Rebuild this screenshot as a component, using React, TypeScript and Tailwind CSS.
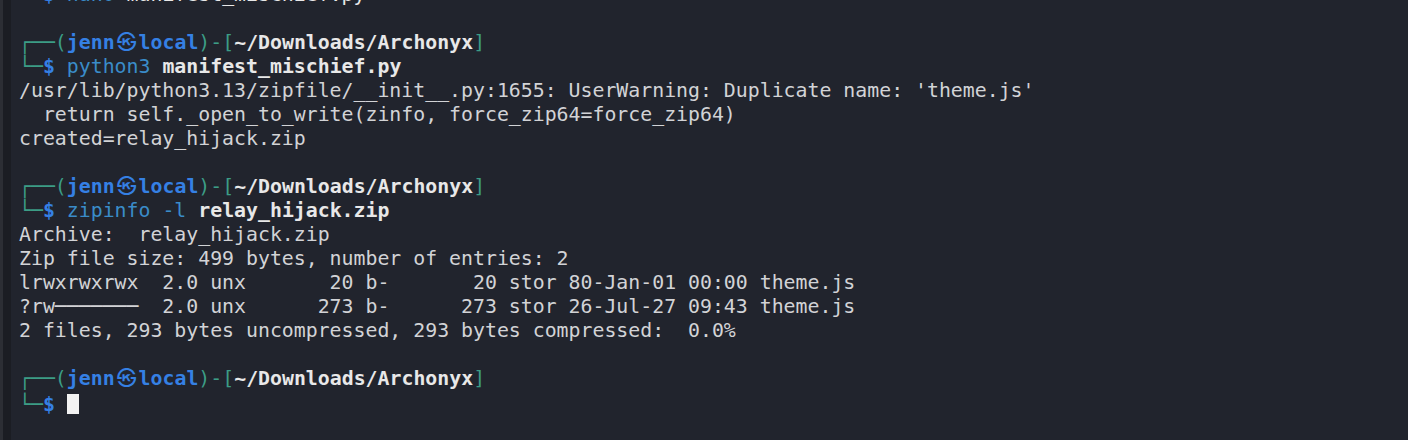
import type { ReactNode } from "react";

const G = "text-[#3c9d86]";
const B = "text-[#3580e4] font-bold";
const CMD = "text-[#3a8cc9]";
const W = "text-[#e8e8e8] font-bold";

function Prompt({ children }: { children?: ReactNode }) {
  return (
    <>
      <div>
        <span className={G}>┌──(</span>
        <span className={B}>
          jenn<span className="inline-block w-[24px] text-center font-normal">㉿</span>local
        </span>
        <span className={G}>)-[</span>
        <span className={W}>~/Downloads/Archonyx</span>
        <span className={G}>]</span>
      </div>
      <div>
        <span className={G}>└─</span>
        <span className={B}>$</span> {children}
      </div>
    </>
  );
}

export default function App() {
  return (
    <div className="flex h-[440px] w-[1408px] overflow-hidden bg-[#21242d]">
      <div className="w-[3px] shrink-0 bg-[#2c2e34]" />
      <div className="w-[8px] shrink-0 bg-[#1b1d23]" />
      <div
        className="flex-1 whitespace-pre pl-[8px] pt-0 text-[19.85px] leading-[24px] text-[#d2d3d6]"
        style={{ fontFamily: '"DejaVu Sans Mono", "Noto Sans CJK JP", monospace' }}
      >
        <div className="-mt-[17px]">
          <span className={G}>└─</span>
          <span className={B}>$</span> <span className={CMD}>nano</span>{" "}
          <span className="text-[#e8e8e8]">manifest_mischief.py</span>
        </div>
        <div>&nbsp;</div>
        <Prompt>
          <span className={CMD}>python3</span> <span className={W}>manifest_mischief.py</span>
        </Prompt>
        <div>/usr/lib/python3.13/zipfile/__init__.py:1655: UserWarning: Duplicate name: 'theme.js'</div>
        <div>  return self._open_to_write(zinfo, force_zip64=force_zip64)</div>
        <div>created=relay_hijack.zip</div>
        <div>&nbsp;</div>
        <Prompt>
          <span className={CMD}>zipinfo -l</span> <span className={W}>relay_hijack.zip</span>
        </Prompt>
        <div>Archive:  relay_hijack.zip</div>
        <div>Zip file size: 499 bytes, number of entries: 2</div>
        <div>lrwxrwxrwx  2.0 unx       20 b-       20 stor 80-Jan-01 00:00 theme.js</div>
        <div>?rw───────  2.0 unx      273 b-      273 stor 26-Jul-27 09:43 theme.js</div>
        <div>2 files, 293 bytes uncompressed, 293 bytes compressed:  0.0%</div>
        <div>&nbsp;</div>
        <Prompt>
          <span className="inline-block h-[20px] w-[12px] translate-y-[3px] bg-[#f2f2f2]" />
        </Prompt>
      </div>
    </div>
  );
}
